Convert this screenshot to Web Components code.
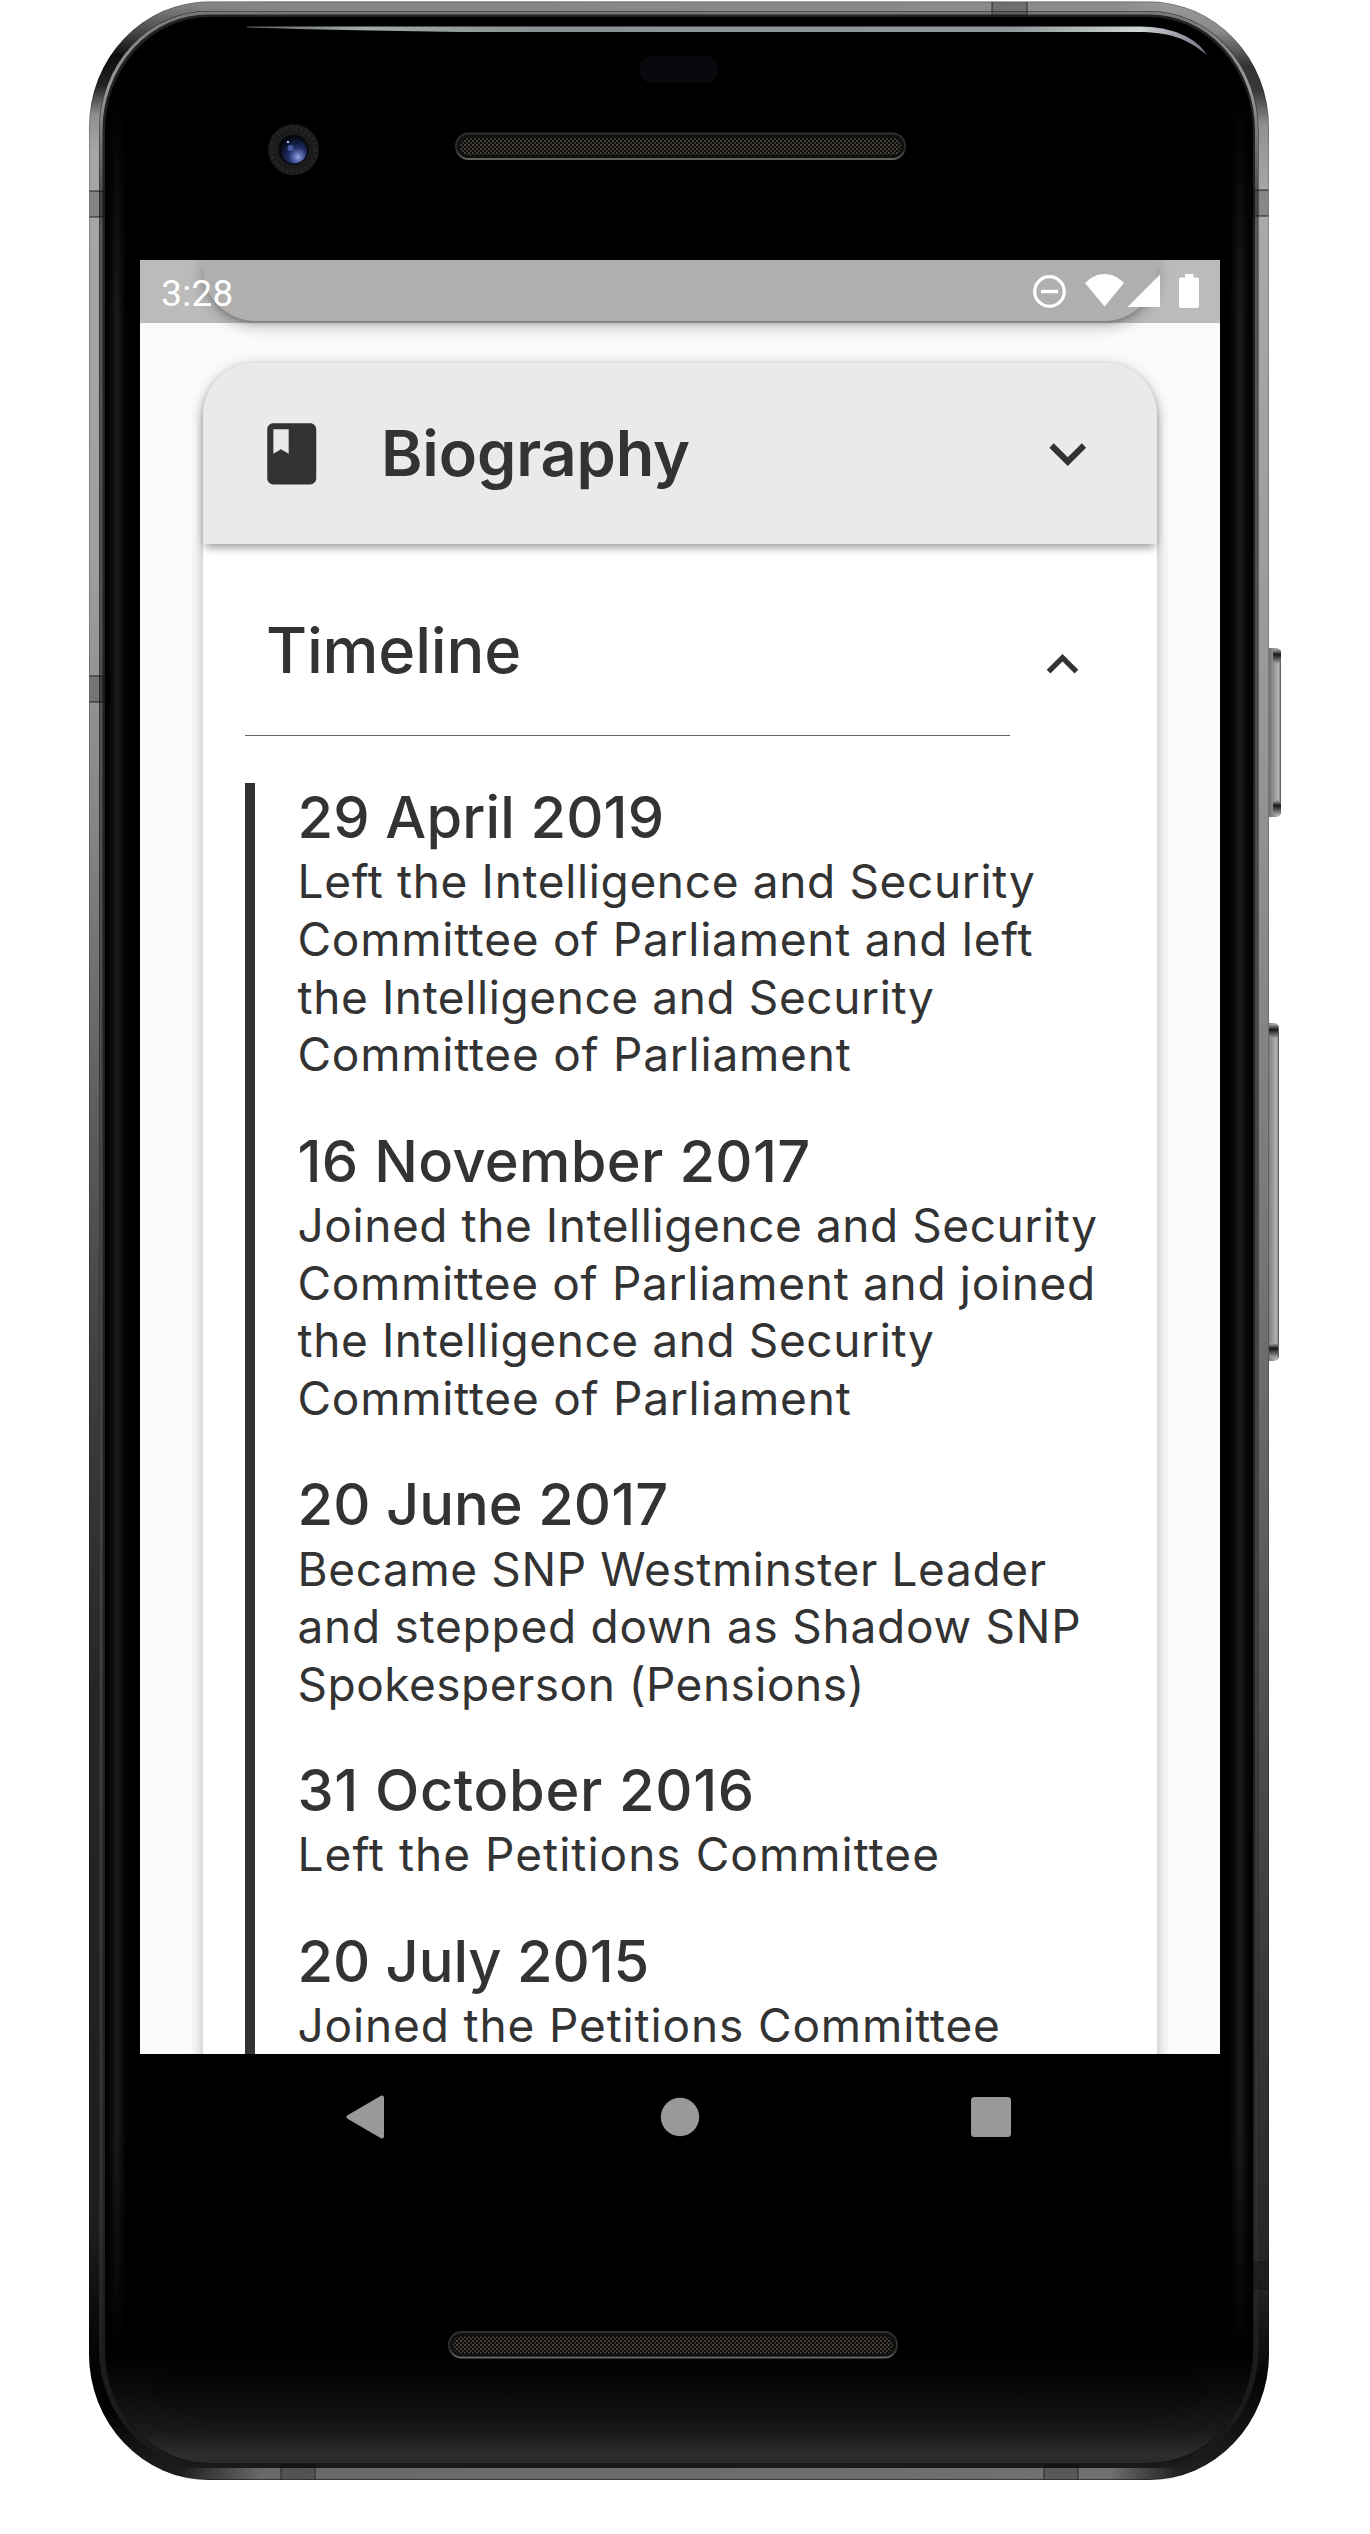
<!DOCTYPE html>
<html lang="en">
<head>
<meta charset="utf-8">
<title>Biography</title>
<style>
html, body { margin: 0; background: #fff; }
body { width: 1370px; height: 2534px; overflow: hidden; font-family: Inter, "Liberation Sans", sans-serif; color: #333; }
</style>
</head>
<body>
<phone-frame>
  <app-screen>
    <status-bar slot="status">3:28</status-bar>
    <previous-card></previous-card>
    <bio-card heading="Biography">
      <timeline-section heading="Timeline">
        <timeline-entry date="29 April 2019" style="--date-tracking:.15px">
          <text-line style="--tracking:.65px">Left the Intelligence and Security</text-line>
          <text-line style="--tracking:.75px">Committee of Parliament and left</text-line>
          <text-line style="--tracking:.6px">the Intelligence and Security</text-line>
          <text-line style="--tracking:.77px">Committee of Parliament</text-line>
        </timeline-entry>
        <timeline-entry date="16 November 2017" style="--date-tracking:.34px">
          <text-line style="--tracking:.57px">Joined the Intelligence and Security</text-line>
          <text-line style="--tracking:.68px">Committee of Parliament and joined</text-line>
          <text-line style="--tracking:.6px">the Intelligence and Security</text-line>
          <text-line style="--tracking:.77px">Committee of Parliament</text-line>
        </timeline-entry>
        <timeline-entry date="20 June 2017" style="--date-tracking:.05px">
          <text-line style="--tracking:.62px">Became SNP Westminster Leader</text-line>
          <text-line style="--tracking:.75px">and stepped down as Shadow SNP</text-line>
          <text-line style="--tracking:.49px">Spokesperson (Pensions)</text-line>
        </timeline-entry>
        <timeline-entry date="31 October 2016" style="--date-tracking:.64px">
          <text-line style="--tracking:1.03px">Left the Petitions Committee</text-line>
        </timeline-entry>
        <timeline-entry date="20 July 2015" style="--date-tracking:-.05px">
          <text-line style="--tracking:.86px">Joined the Petitions Committee</text-line>
        </timeline-entry>
      </timeline-section>
    </bio-card>
  </app-screen>
  <nav-bar slot="nav"></nav-bar>
</phone-frame>
<script>
function define(name, html) {
  customElements.define(name, class extends HTMLElement {
    connectedCallback() {
      const root = this.attachShadow({ mode: 'open' });
      root.innerHTML = html;
      for (const el of root.querySelectorAll('[data-attr]')) el.textContent = this.getAttribute(el.dataset.attr);
    }
  });
}

define('phone-frame', `
<style>
:host { display: flex; flex-direction: column; position: relative; isolation: isolate; box-sizing: border-box; width: 1370px; height: 2534px; padding: 260px 150px 0 140px; }
.shell { position: absolute; left: 0; top: 0; z-index: -1; }
</style>
<svg class="shell" width="1370" height="2534" viewBox="0 0 1370 2534">
  <defs>
    <linearGradient id="metal" x1="0" y1="0" x2="0" y2="1">
      <stop offset="0" stop-color="#8a8a8a"/><stop offset=".012" stop-color="#4a4a4a"/><stop offset=".022" stop-color="#0c0c0c"/>
      <stop offset=".034" stop-color="#242424"/><stop offset=".046" stop-color="#909090"/><stop offset=".06" stop-color="#a6a6a6"/>
      <stop offset=".22" stop-color="#a0a0a0"/><stop offset=".33" stop-color="#868686"/><stop offset=".44" stop-color="#606060"/>
      <stop offset=".56" stop-color="#3d3d3d"/><stop offset=".68" stop-color="#262626"/><stop offset=".9" stop-color="#1d1d1d"/>
      <stop offset=".94" stop-color="#080808"/><stop offset=".97" stop-color="#000"/><stop offset="1" stop-color="#222"/>
    </linearGradient>
    <linearGradient id="metalR" x1="0" y1="0" x2="0" y2="1">
      <stop offset="0" stop-color="#999"/><stop offset=".012" stop-color="#8a8a8a"/><stop offset=".026" stop-color="#333"/>
      <stop offset=".036" stop-color="#383838"/><stop offset=".05" stop-color="#919191"/><stop offset=".08" stop-color="#aaa"/>
      <stop offset=".3" stop-color="#969696"/><stop offset=".5" stop-color="#777"/><stop offset=".66" stop-color="#555"/>
      <stop offset=".8" stop-color="#393939"/><stop offset=".92" stop-color="#252525"/><stop offset=".96" stop-color="#050505"/><stop offset="1" stop-color="#222"/>
    </linearGradient>
    <linearGradient id="topEdge" x1="0" y1="0" x2="1" y2="0">
      <stop offset="0" stop-color="#888" stop-opacity="0"/><stop offset=".14" stop-color="#858585"/><stop offset=".9" stop-color="#8b8b8b"/><stop offset="1" stop-color="#999" stop-opacity="0"/>
    </linearGradient>
    <linearGradient id="bottomEdge" x1="0" y1="0" x2="1" y2="0">
      <stop offset="0" stop-color="#666" stop-opacity="0"/><stop offset=".08" stop-color="#686868"/><stop offset=".93" stop-color="#707070"/><stop offset="1" stop-color="#666" stop-opacity="0"/>
    </linearGradient>
    <linearGradient id="rim" x1="0" y1="0" x2="0" y2="1">
      <stop offset="0" stop-color="#777"/><stop offset=".03" stop-color="#999"/><stop offset=".07" stop-color="#555"/><stop offset=".6" stop-color="#444"/><stop offset=".9" stop-color="#303030"/><stop offset=".96" stop-color="#1c1c1c"/><stop offset="1" stop-color="#1a1a1a"/>
    </linearGradient>
    <linearGradient id="channel" x1="0" y1="0" x2="0" y2="1">
      <stop offset="0" stop-color="#222"/><stop offset=".9" stop-color="#222"/><stop offset="1" stop-color="#161616"/>
    </linearGradient>
    <linearGradient id="sheen" x1="0" y1="0" x2="1" y2="0">
      <stop offset="0" stop-color="#000"/><stop offset=".5" stop-color="#1c1c1c"/><stop offset="1" stop-color="#000"/>
    </linearGradient>
    <linearGradient id="sheenFadeG" x1="0" y1="0" x2="0" y2="1">
      <stop offset="0" stop-color="#000"/><stop offset=".1" stop-color="#fff"/><stop offset=".9" stop-color="#fff"/><stop offset="1" stop-color="#000"/>
    </linearGradient>
    <mask id="sheenFade"><rect x="80" y="90" width="1200" height="2270" fill="url(#sheenFadeG)"/></mask>
    <linearGradient id="glow" x1="0" y1="0" x2="0" y2="1">
      <stop offset="0" stop-color="#000"/><stop offset=".38" stop-color="#0c0c0c"/><stop offset=".72" stop-color="#1a1a1a"/><stop offset=".93" stop-color="#2e2e2e"/><stop offset="1" stop-color="#292929"/>
    </linearGradient>
    <linearGradient id="shine" x1="0" y1="0" x2="1" y2="0">
      <stop offset="0" stop-color="#b0b8b8" stop-opacity=".5"/><stop offset=".12" stop-color="#a0a8a8"/><stop offset=".3" stop-color="#899292"/><stop offset=".8" stop-color="#8f9999"/><stop offset=".93" stop-color="#cfd4d4"/><stop offset="1" stop-color="#777788"/>
    </linearGradient>
    <linearGradient id="button" x1="0" y1="0" x2="1" y2="0">
      <stop offset="0" stop-color="#777"/><stop offset=".3" stop-color="#707070"/><stop offset=".42" stop-color="#808080"/><stop offset=".7" stop-color="#a2a2a2"/><stop offset=".85" stop-color="#b4b4b4"/><stop offset=".93" stop-color="#888"/><stop offset="1" stop-color="#444"/>
    </linearGradient>
    <linearGradient id="buttonTip" x1="0" y1="0" x2="0" y2="1">
      <stop offset="0" stop-color="#aaa"/><stop offset=".4" stop-color="#181818"/><stop offset="1" stop-color="#999"/>
    </linearGradient>
    <linearGradient id="grilleRim" x1="0" y1="0" x2="0" y2="1">
      <stop offset="0" stop-color="#303032"/><stop offset=".65" stop-color="#28282a"/><stop offset="1" stop-color="#65635f"/>
    </linearGradient>
    <pattern id="mesh" width="4" height="4" patternUnits="userSpaceOnUse">
      <rect width="4" height="4" fill="#0c0b09"/><rect width="2" height="2" fill="#45423a"/><rect x="2" y="2" width="2" height="2" fill="#38352e"/>
    </pattern>
    <radialGradient id="lens" cx=".65" cy=".75" r=".75">
      <stop offset="0" stop-color="#98a5e0"/><stop offset=".22" stop-color="#5a69ad"/><stop offset=".5" stop-color="#1d2c62"/><stop offset="1" stop-color="#070b1b"/>
    </radialGradient>
    <clipPath id="leftHalf"><rect width="680" height="2534"/></clipPath>
    <clipPath id="rightHalf"><rect x="680" width="690" height="2534"/></clipPath>
    <clipPath id="glass"><rect x="105" y="17" width="1148" height="2446" rx="104" ry="114"/></clipPath>
    <filter id="soft" x="-10%" y="-10%" width="120%" height="120%"><feGaussianBlur stdDeviation="14"/></filter>
  </defs>

  <g id="side-buttons">
    <rect x="1264" y="648" width="17" height="169" rx="5" fill="url(#button)"/>
    <rect x="1273" y="649" width="8" height="14" rx="3" fill="url(#buttonTip)"/><rect x="1273" y="800" width="8" height="14" rx="3" fill="url(#buttonTip)"/>
    <rect x="1262" y="1023" width="17" height="338" rx="5" fill="url(#button)"/>
    <rect x="1268" y="1024" width="10" height="14" rx="3" fill="url(#buttonTip)"/><rect x="1268" y="1343" width="10" height="14" rx="3" fill="url(#buttonTip)"/>
  </g>

  <rect x="89" y="1.500" width="1180" height="2478.500" rx="120" ry="126" fill="url(#metal)" clip-path="url(#leftHalf)"/>
  <rect x="89" y="1.500" width="1180" height="2478.500" rx="120" ry="126" fill="url(#metalR)" clip-path="url(#rightHalf)"/>
  <rect x="140" y="1.500" width="1080" height="13" fill="url(#topEdge)" clip-path="inset(0 60px 0 60px)"/>
  <rect x="180" y="2468" width="1000" height="11.500" fill="url(#bottomEdge)"/>
  <rect x="89.500" y="2" width="1179" height="2477.500" rx="119" ry="125" fill="none" stroke="#000" stroke-opacity=".2"/>
  <rect x="99" y="11" width="1159.500" height="2457" rx="109" ry="119" fill="url(#channel)"/>
  <rect x="101" y="13" width="1155.500" height="2453" rx="107" ry="117" fill="none" stroke="url(#rim)" stroke-width="3"/>
  <rect x="105" y="17" width="1148" height="2446" rx="104" ry="114" fill="#000"/>

  <g id="glass-light" clip-path="url(#glass)">
    <rect x="105" y="2350" width="1148" height="113" fill="url(#glow)"/>
    <rect x="145" y="2180" width="1068" height="240" rx="62" fill="#000" opacity=".2" filter="url(#soft)"/>
    <g mask="url(#sheenFade)">
      <rect x="108" y="90" width="18" height="2270" fill="url(#sheen)"/>
      <rect x="1230" y="90" width="20" height="2270" fill="url(#sheen)"/>
    </g>
  </g>

  <g id="antenna-seams" fill="#000" fill-opacity=".2">
    <rect x="89.500" y="191" width="15.500" height="26"/><rect x="89.500" y="676" width="15.500" height="26"/>
    <rect x="1253" y="190" width="15.500" height="26"/><rect x="1253" y="2262" width="15.500" height="27"/>
    <rect x="992" y="2" width="35" height="14"/><rect x="281" y="2464" width="34" height="15.500"/><rect x="1044" y="2464" width="34" height="15.500"/>
  </g>
  <path d="M89.500 191H105M89.500 217H105M89.500 676H105M89.500 702H105M1253 190H1268.500M1253 216H1268.500M1253 2262H1268.500M1253 2289H1268.500M992 2V16M1027 2V16M281 2464V2479.500M315 2464V2479.500M1044 2464V2479.500M1078 2464V2479.500" stroke="#151515" stroke-opacity=".6" stroke-width="1.300"/>

  <path d="M247 26.500 H1140 C1172 26.500 1197 38 1207 55 C1187 38 1168 32 1138 32 H460 Q330 30 247 27.500Z" fill="url(#shine)"/>
  <rect x="640" y="56" width="78" height="27" rx="12" fill="#08090d"/>

  <g id="camera">
    <circle cx="293.500" cy="149.700" r="25.500" fill="#1b1b1b"/>
    <circle cx="293.500" cy="149.700" r="22" fill="none" stroke="#262626" stroke-width="4" stroke-dasharray="2 3"/>
    <circle cx="293.500" cy="149.700" r="15" fill="#05070d"/>
    <circle cx="294" cy="150.500" r="13" fill="url(#lens)"/>
    <circle cx="290.500" cy="148" r="3" fill="#465aa0"/><circle cx="288" cy="142" r="1.200" fill="#a9b6e8"/>
  </g>

  <g id="speakers" fill="url(#mesh)" stroke-width="2">
    <rect x="456" y="133.500" width="449" height="25.500" rx="12.500" fill="#101010" stroke="url(#grilleRim)"/>
    <rect x="460" y="138" width="441" height="17" rx="8"/>
    <rect x="449" y="2332" width="448" height="25.500" rx="12.500" fill="#101010" stroke="url(#grilleRim)"/>
    <rect x="453" y="2336.500" width="440" height="17" rx="8"/>
  </g>
</svg>
<slot></slot>
<slot name="nav"></slot>`);

define('app-screen', `
<style>
:host { display: block; width: 1080px; height: 1794px; overflow: hidden; background: #fafafa; position: relative; }
.overlay { position: absolute; left: 0; top: 0; right: 0; z-index: 2; }
.content { display: flex; flex-direction: column; gap: 42px; padding: 0 63px; }
</style>
<div class="overlay"><slot name="status"></slot></div>
<div class="content"><slot></slot></div>`);

define('status-bar', `
<style>
:host { display: flex; align-items: center; justify-content: space-between; box-sizing: border-box; height: 63px; padding-left: 21.300px; background: rgba(0,0,0,.25); color: #fff; font: 400 36.750px Roboto, sans-serif; letter-spacing: .3px; }
.time { padding-top: 3px; }
svg { display: block; }
</style>
<span class="time"><slot></slot></span>
<svg width="200" height="63" viewBox="1020 260 200 63" fill="#fff">
  <circle cx="1049.500" cy="291.500" r="14.800" fill="none" stroke="#fff" stroke-width="3.200"/>
  <rect x="1041" y="289.800" width="17" height="3.500"/>
  <path d="M1104.500 306.500 L1085 283 C1097 271 1112 271 1124 283Z"/>
  <path d="M1127.500 307 H1160 V274.500Z"/>
  <path d="M1185 274 H1193.500 V277.500 H1197 Q1199 277.500 1199 279.500 V306 Q1199 308 1197 308 H1181 Q1179 308 1179 306 V279.500 Q1179 277.500 1181 277.500 H1185Z"/>
</svg>`);

define('previous-card', `
<style>
:host { display: block; height: 61px; border-radius: 0 0 52.500px 52.500px; background: #ebeae9; box-shadow: 0 5px 5px -3px rgba(0,0,0,.2), 0 3px 14px 2px rgba(0,0,0,.14), 0 5px 16px rgba(0,0,0,.12); }
</style>`);

define('bio-card', `
<style>
:host { display: block; height: 1760px; border-radius: 52.500px; background: #fff; box-shadow: 0 5px 5px -3px rgba(0,0,0,.2), 0 3px 14px 1px rgba(0,0,0,.16), 0 5px 14px rgba(0,0,0,.1); }
header { display: flex; align-items: center; box-sizing: border-box; height: 181px; padding: 0 52.500px 0 51.800px; border-radius: 52.500px 52.500px 0 0; background: #ebeae9; box-shadow: 0 6px 8px -2px rgba(0,0,0,.28), 0 3px 12px -3px rgba(0,0,0,.2); }
h1 { flex: 1; margin: 0 0 0 52.700px; padding-bottom: 1.500px; font: 600 63px/76px Inter, sans-serif; letter-spacing: -.15px; }
svg { display: block; flex: none; }
</style>
<header>
  <svg width="73.500" height="73.500" viewBox="0 0 24 24" fill="#333"><path d="M18 2H6c-1.100 0-2 .9-2 2v16c0 1.100.9 2 2 2h12c1.100 0 2-.9 2-2V4c0-1.100-.9-2-2-2zM6 4h5v8l-2.500-1.500L6 12V4z"/></svg>
  <h1 data-attr="heading"></h1>
  <svg width="73.500" height="73.500" viewBox="0 0 24 24" fill="#333"><path d="M16.590 8.590L12 13.170 7.410 8.590 6 10l6 6 6-6z"/></svg>
</header>
<slot></slot>`);

define('timeline-section', `
<style>
:host { display: block; padding: 0 20px 0 42px; }
.bar { display: flex; align-items: flex-start; gap: 21px; }
h2 { box-sizing: border-box; width: 765px; height: 192.300px; margin: 0; padding: 68px 0 0 21px; border-bottom: 1px solid #666; font: 500 63px/76px Inter, sans-serif; letter-spacing: -.2px; }
svg { display: block; margin-top: 88.500px; }
.entries { display: flex; flex-direction: column; gap: 42.700px; margin-top: 46.700px; padding-left: 42.500px; border-left: 10.500px solid #333; }
</style>
<div class="bar">
  <h2 data-attr="heading"></h2>
  <svg width="63" height="63" viewBox="0 0 24 24" fill="#333"><path d="M12 8l-6 6 1.410 1.410L12 10.830l4.590 4.580L18 14z"/></svg>
</div>
<div class="entries"><slot></slot></div>`);

define('timeline-entry', `
<style>
:host { display: block; }
h3 { margin: 0 0 1.300px; font: 500 57.750px/69px Inter, sans-serif; letter-spacing: var(--date-tracking, 0); }
.description { display: flex; flex-direction: column; font: 400 46px/57.650px Inter, sans-serif; }
</style>
<h3 data-attr="date"></h3>
<div class="description"><slot></slot></div>`);

define('text-line', `
<style>
:host { display: block; white-space: nowrap; letter-spacing: var(--tracking, 0); }
</style>
<slot></slot>`);

define('nav-bar', `
<style>
:host { display: flex; justify-content: space-between; align-items: center; height: 126px; padding: 0 209px 0 206px; width: 1080px; box-sizing: border-box; }
svg { display: block; }
</style>
<svg width="42" height="44" viewBox="0 0 42 44"><path d="M2.500 22 L36 2.500 V41.500Z" fill="#999" stroke="#999" stroke-width="4" stroke-linejoin="round"/></svg>
<svg width="40" height="40" viewBox="0 0 40 40"><circle cx="20" cy="20" r="19.200" fill="#999"/></svg>
<svg width="40" height="40" viewBox="0 0 40 40"><rect width="40" height="40" rx="3.500" fill="#999"/></svg>`);
</script>
</body>
</html>
